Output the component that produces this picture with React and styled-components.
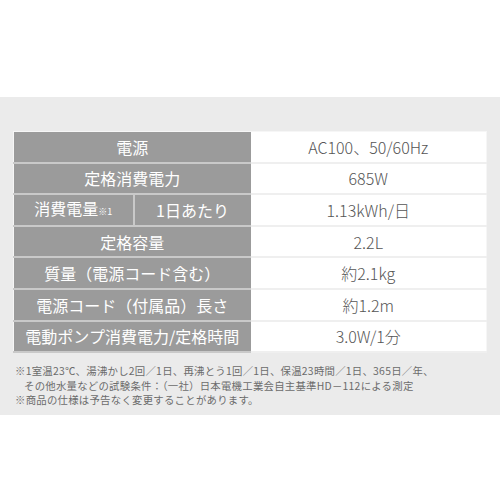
import React from "react";
import styled, { createGlobalStyle } from "styled-components";

const Global = createGlobalStyle`
  html, body { margin: 0; padding: 0; background: #ffffff; }
  body { width: 500px; height: 500px; overflow: hidden; font-family: "Noto Sans CJK JP", "Noto Sans", sans-serif; }
`;

const Page = styled.div`
  width: 500px;
  height: 500px;
  padding-top: 97px;
  box-sizing: border-box;
`;

const Panel = styled.section`
  background: #ebebeb;
  height: 318px;
  box-sizing: border-box;
  padding: 34px 14px 0 13px;
`;

const Table = styled.table`
  width: 473px;
  border-collapse: collapse;
  table-layout: fixed;
  border: 1px solid #f6f6f6;
`;

const Label = styled.th`
  background: #9b9b9b;
  color: #ffffff;
  font-weight: 400;
  font-size: 16px;
  height: 29.6px;
  padding: 0;
  text-align: center;
  white-space: nowrap;
  border-bottom: 2px solid #c9c9c9;
  border-right: ${(p) => (p.$split ? "2px solid #c9c9c9" : "none")};
  line-height: 20px;
`;

const Value = styled.td`
  background: #ffffff;
  color: #555555;
  font-size: 16px;
  font-weight: 300;
  height: 29.6px;
  padding: 0;
  text-align: center;
  white-space: nowrap;
  border-bottom: 2px solid #efefef;
  line-height: 20px;
`;

const Sup = styled.span`
  font-size: 9px;
  vertical-align: baseline;
`;

const Notes = styled.div`
  margin-top: 11px;
  color: #6b6b6b;
  font-size: 10.4px;
  line-height: 14.5px;
`;

const Note = styled.p`
  margin: 0;
  padding-left: ${(p) => (p.$indent ? "11px" : "2px")};
  white-space: nowrap;
  letter-spacing: 0.25px;
`;

const rows = [
  ["電源", "AC100、50/60Hz"],
  ["定格消費電力", "685W"],
  null,
  ["定格容量", "2.2L"],
  ["質量（電源コード含む）", "約2.1kg"],
  ["電源コード（付属品）長さ", "約1.2m"],
  ["電動ポンプ消費電力/定格時間", "3.0W/1分"],
];

export default function App() {
  return (
    <>
      <Global />
      <Page>
        <Panel>
          <Table>
            <colgroup>
              <col style={{ width: "120px" }} />
              <col style={{ width: "117px" }} />
              <col style={{ width: "236px" }} />
            </colgroup>
            <tbody>
              {rows.map((r, i) =>
                r ? (
                  <tr key={i}>
                    <Label colSpan={2}>{r[0]}</Label>
                    <Value>{r[1]}</Value>
                  </tr>
                ) : (
                  <tr key={i}>
                    <Label $split>
                      消費電量<Sup>※1</Sup>
                    </Label>
                    <Label>1日あたり</Label>
                    <Value>1.13kWh/日</Value>
                  </tr>
                )
              )}
            </tbody>
          </Table>
          <Notes>
            <Note>※1室温23℃、湯沸かし2回／1日、再沸とう1回／1日、保温23時間／1日、365日／年、</Note>
            <Note $indent>その他水量などの試験条件：（一社）日本電機工業会自主基準HD－112による測定</Note>
            <Note>※商品の仕様は予告なく変更することがあります。</Note>
          </Notes>
        </Panel>
      </Page>
    </>
  );
}
